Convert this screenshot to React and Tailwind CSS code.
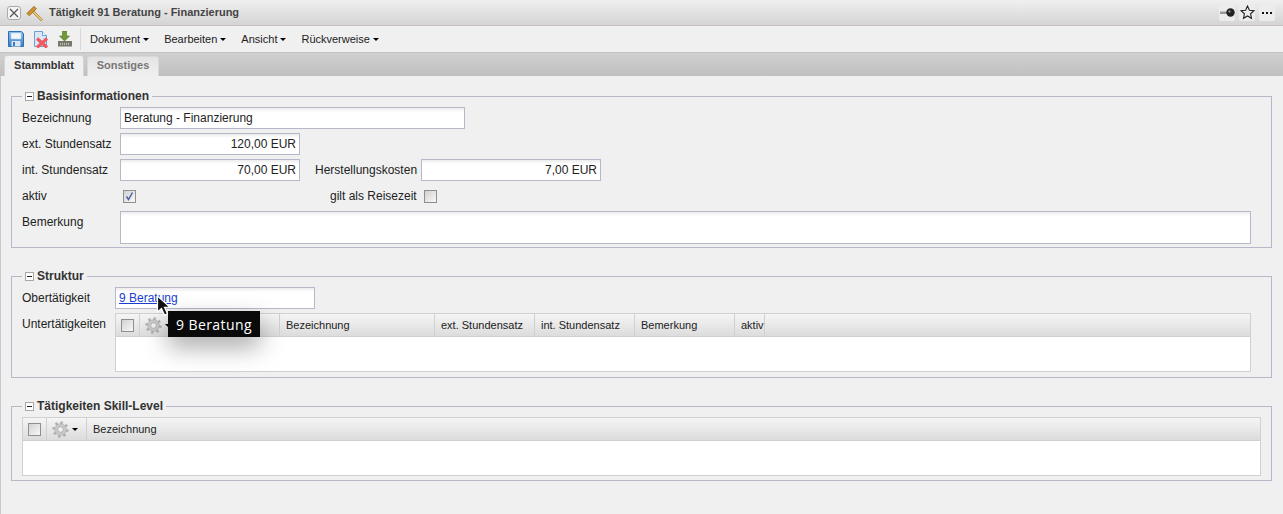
import React from "react";

const font = "font-['Liberation_Sans',Arial,sans-serif]";

const Caret = () => (
    <span className="inline-block ml-[3px] align-middle w-0 h-0 border-x-[3px] border-x-transparent border-t-[3px] border-t-black" />
);

const SaveIcon = () => (
    <svg width="16" height="16" viewBox="0 0 16 16">
        <defs>
            <linearGradient id="saveFill" x1="0" y1="0" x2="0" y2="1">
                <stop offset="0" stopColor="#8fbdea" />
                <stop offset="1" stopColor="#3f7fc8" />
            </linearGradient>
        </defs>
        <path d="M.5.5h13l2 2v13H.5z" fill="url(#saveFill)" stroke="#2f6db5" />
        <rect x="3" y="2" width="10" height="6" fill="#f2f7fc" stroke="#a9cbea" strokeWidth=".5" />
        <rect x="3.500" y="10" width="9" height="5.500" fill="#d5e6f6" />
        <rect x="5" y="11" width="2" height="4" fill="#3f7cc0" />
    </svg>
);

const DeleteIcon = () => (
    <svg width="16" height="17" viewBox="0 0 16 17">
        <path d="M1.500.5h8l4 4v11h-12z" fill="#d8e8f8" stroke="#6f9fd8" />
        <path d="M9.500.5v4h4" fill="#fff" stroke="#6f9fd8" />
        <path d="M4 7.500l10 9M14 7.500L4 16.500" stroke="#ee5a60" strokeWidth="3.200" />
    </svg>
);

const DownloadIcon = () => (
    <svg width="16" height="16" viewBox="0 0 16 16">
        <path d="M5.500 0h4v5h3L7.500 10 2.500 5h3z" fill="#6f9a35" stroke="#4d7420" strokeWidth=".6" />
        <rect x="1" y="10" width="14" height="5.500" fill="#77776a" />
        <path d="M3 13h10" stroke="#fff" strokeDasharray="1 1" />
    </svg>
);

const HammerIcon = () => (
    <svg width="18" height="18" viewBox="0 0 18 18">
        <path d="M7 6l9.500 9.500-1.500 1.500L5.500 7.500z" fill="#e6c27a" stroke="#a97f2c" strokeWidth=".7" />
        <path d="M.8 9.500L8 2.300l2.400 2.400-7 7z" fill="#d0922e" stroke="#8e5e14" strokeWidth=".7" />
    </svg>
);

const GearIcon = () => (
    <svg width="17" height="17" viewBox="0 0 17 17">
        <circle cx="8.500" cy="8.500" r="6.800" fill="none" stroke="#b0b0b0" strokeWidth="2.800" strokeDasharray="2.400 2.900" />
        <circle cx="8.500" cy="8.500" r="5.800" fill="#cacaca" stroke="#a6a6a6" strokeWidth=".6" />
        <circle cx="8.500" cy="8.500" r="2.800" fill="#efefef" stroke="#9a9a9a" strokeWidth=".6" />
    </svg>
);

const Check = ({ checked }) => (
    <span className="flex items-center justify-center w-[13px] h-[13px] border border-[#8f8f8f] bg-gradient-to-br from-[#d2d2d2] to-[#f8f8f8]">
        {checked && (
            <svg width="9" height="9" viewBox="0 0 9 9">
                <path d="M1.500 4.500L3.500 7.500 7.500 .5" fill="none" stroke="#4a5fa8" strokeWidth="1.500" />
            </svg>
        )}
    </span>
);

const Input = ({ className = "", children }) => (
    <div className={`h-[22px] border border-[#b5b8c8] bg-white bg-gradient-to-b from-[#ececec] to-white to-[4px] px-[3px] leading-[20px] text-[12px] text-[#222] ${className}`}>
        {children}
    </div>
);

const Label = ({ className = "", children }) => (
    <span className={`text-[12px] text-[#222] ${className}`}>{children}</span>
);

const Section = ({ title, className = "", children }) => (
    <fieldset className={`ml-[10px] mr-[11px] border border-[#b5b8c8] px-[10px] ${className}`}>
        <legend className="px-[3px] flex items-center h-[14px] text-[12px] font-bold text-[#333]">
            <span className="flex items-center justify-center w-[9px] h-[9px] border border-[#a8a8a8] bg-white mr-[3px]">
                <span className="w-[5px] h-px bg-[#222]" />
            </span>
            <span>{title}</span>
        </legend>
        {children}
    </fieldset>
);

const HeaderCell = ({ className = "", children }) => (
    <div className={`h-full flex items-center border-r border-[#d0d0d0] px-[6px] text-[11px] text-[#222] shrink-0 ${className}`}>
        {children}
    </div>
);

const Grid = ({ gearWidth, columns, className = "" }) => (
    <div className={`h-[59px] border border-[#d0d0d0] bg-white ${className}`}>
        <div className="h-[23px] flex bg-gradient-to-b from-[#f5f5f5] to-[#dcdcdc] border-b border-[#d0d0d0]">
            <HeaderCell className="w-[24px] justify-center !px-0">
                <Check />
            </HeaderCell>
            <HeaderCell className={`${gearWidth} !px-[5px]`}>
                <GearIcon />
                <Caret />
            </HeaderCell>
            {columns.map((c) => (
                <HeaderCell key={c.name} className={c.width}>
                    {c.name}
                </HeaderCell>
            ))}
        </div>
    </div>
);

const App = () => {
    return (
        <div className={`relative w-[1283px] h-[514px] overflow-hidden bg-[#f0f0f0] ${font}`}>
            {/* title bar */}
            <div className="h-[26px] flex items-center pl-[7px] pr-[8px] bg-gradient-to-b from-[#f0f0f0] to-[#d4d4d4] border-b border-[#c8bfbf]">
                <span className="flex items-center justify-center w-[14px] h-[14px] rounded-[3px] border border-[#aaa] bg-[#f4f4f4]">
                    <svg width="10" height="10" viewBox="0 0 10 10">
                        <path d="M1 1l8 8M9 1l-8 8" stroke="#555" strokeWidth="1.200" />
                    </svg>
                </span>
                <span className="ml-[5px]">
                    <HammerIcon />
                </span>
                <span className="ml-[5px] text-[11px] font-bold text-[#444]">Tätigkeit 91 Beratung - Finanzierung</span>
                <div className="ml-auto flex items-center gap-[4px]">
                    <span className="flex items-center justify-center w-[16px] h-[16px] rounded-[2px] bg-[#ececec]">
                        <svg width="15" height="9" viewBox="0 0 15 9">
                            <path d="M0 3.500h8v2.500H0z" fill="#999" />
                            <circle cx="10.500" cy="4.500" r="4.200" fill="#222" />
                            <circle cx="9.500" cy="3.500" r="1.100" fill="#aaa" />
                        </svg>
                    </span>
                    <span className="flex items-center justify-center w-[16px] h-[16px] rounded-[2px] bg-[#ececec]">
                        <svg width="15" height="15" viewBox="0 0 15 15">
                            <path d="M7.500 1l1.900 4.200 4.600.5-3.400 3.100.9 4.500-4-2.300-4 2.300.9-4.500L1 5.700l4.600-.5z" fill="none" stroke="#222" strokeWidth="1.100" />
                        </svg>
                    </span>
                    <span className="flex items-center justify-center gap-[2px] w-[16px] h-[16px] rounded-[2px] bg-[#ececec]">
                        <span className="w-[2px] h-[2px] bg-[#111]" />
                        <span className="w-[2px] h-[2px] bg-[#111]" />
                        <span className="w-[2px] h-[2px] bg-[#111]" />
                    </span>
                </div>
            </div>

            {/* toolbar */}
            <div className="h-[27px] flex items-center pl-[8px] bg-[#f0f0f0] border-b border-[#c8bfbf] text-[11px] text-[#222]">
                <SaveIcon />
                <span className="ml-[9px]">
                    <DeleteIcon />
                </span>
                <span className="ml-[8px]">
                    <DownloadIcon />
                </span>
                <span className="ml-[7px] w-px h-[22px] bg-[#d8d8d8]" />
                <div className="ml-[9px] flex gap-[15px]">
                    <span>Dokument<Caret /></span>
                    <span>Bearbeiten<Caret /></span>
                    <span>Ansicht<Caret /></span>
                    <span>Rückverweise<Caret /></span>
                </div>
            </div>

            {/* tabs */}
            <div className="h-[23px] flex items-end gap-[3px] pl-[4px] bg-gradient-to-b from-[#d0d0d0] to-[#c0c0c0] text-[11px] font-bold">
                <div className="w-[80px] h-[21px] pb-[1px] flex items-center justify-center rounded-t-[3px] border border-b-0 border-[#d4d4d4] bg-[#f0f0f0] text-[#333]">
                    Stammblatt
                </div>
                <div className="w-[72px] h-[20px] pb-[2px] flex items-center justify-center rounded-t-[3px] border border-b-0 border-[#d8d8d8] bg-gradient-to-b from-[#e4e4e4] to-[#f0f0f0] text-[#777]">
                    Sonstiges
                </div>
            </div>

            {/* content */}
            <div className="h-[438px] border-l border-[#c8c8c8] pt-[13px]">
                <Section title="Basisinformationen" className="h-[159px]">
                    <div className="flex flex-col gap-[4px] pt-[4px]">
                        <div className="flex items-center">
                            <Label className="w-[98px]">Bezeichnung</Label>
                            <Input className="w-[345px]">Beratung - Finanzierung</Input>
                        </div>
                        <div className="flex items-center">
                            <Label className="w-[98px]">ext. Stundensatz</Label>
                            <Input className="w-[180px] text-right">120,00 EUR</Input>
                        </div>
                        <div className="flex items-center">
                            <Label className="w-[98px]">int. Stundensatz</Label>
                            <Input className="w-[180px] text-right">70,00 EUR</Input>
                            <Label className="ml-[15px] w-[106px]">Herstellungskosten</Label>
                            <Input className="w-[180px] text-right">7,00 EUR</Input>
                        </div>
                        <div className="flex items-center h-[22px]">
                            <Label className="w-[101px]">aktiv</Label>
                            <Check checked />
                            <Label className="ml-[194px] w-[94px]">gilt als Reisezeit</Label>
                            <Check />
                        </div>
                        <div className="flex items-start">
                            <Label className="w-[98px] pt-[2px]">Bemerkung</Label>
                            <Input className="w-[1131px] !h-[33px]" />
                        </div>
                    </div>
                </Section>

                <Section title="Struktur" className="h-[109px] mt-[21px]">
                    <div className="flex flex-col gap-[4px] pt-[4px]">
                        <div className="flex items-center">
                            <Label className="w-[93px]">Obertätigkeit</Label>
                            <Input className="w-[200px]">
                                <span className="text-[#1a3fd0] underline">9 Beratung</span>
                            </Input>
                        </div>
                        <div className="flex items-start">
                            <Label className="w-[93px] pt-[2px]">Untertätigkeiten</Label>
                            <Grid
                                className="w-[1136px]"
                                gearWidth="w-[140px]"
                                columns={[
                                    { name: "Bezeichnung", width: "w-[155px]" },
                                    { name: "ext. Stundensatz", width: "w-[100px]" },
                                    { name: "int. Stundensatz", width: "w-[100px]" },
                                    { name: "Bemerkung", width: "w-[100px]" },
                                    { name: "aktiv", width: "w-[30px]" },
                                ]}
                            />
                        </div>
                    </div>
                </Section>

                <Section title="Tätigkeiten Skill-Level" className="h-[82px] mt-[21px]">
                    <div className="pt-[4px]">
                        <Grid
                            className="w-[1239px]"
                            gearWidth="w-[40px]"
                            columns={[{ name: "Bezeichnung", width: "w-[160px] !border-r-0" }]}
                        />
                    </div>
                </Section>
            </div>

            {/* tooltip and mouse pointer over the grid */}
            <div className="absolute left-[168px] top-[311px] w-[92px] h-[26px] flex items-center justify-center bg-[#0a0a0a] text-white text-[14px] tracking-[0.4px] font-['Open_Sans',sans-serif] shadow-[0_10px_25px_rgba(0,0,0,0.35)]">
                9 Beratung
            </div>
            <svg className="absolute left-[156px] top-[295px]" width="17" height="22" viewBox="0 0 17 22">
                <path d="M1.500 1v16l4-3.500 3 6.500 3-1.300-3-6.300h5.500z" fill="#111" stroke="#fff" strokeWidth="1.200" />
            </svg>
        </div>
    );
};

export default App;
